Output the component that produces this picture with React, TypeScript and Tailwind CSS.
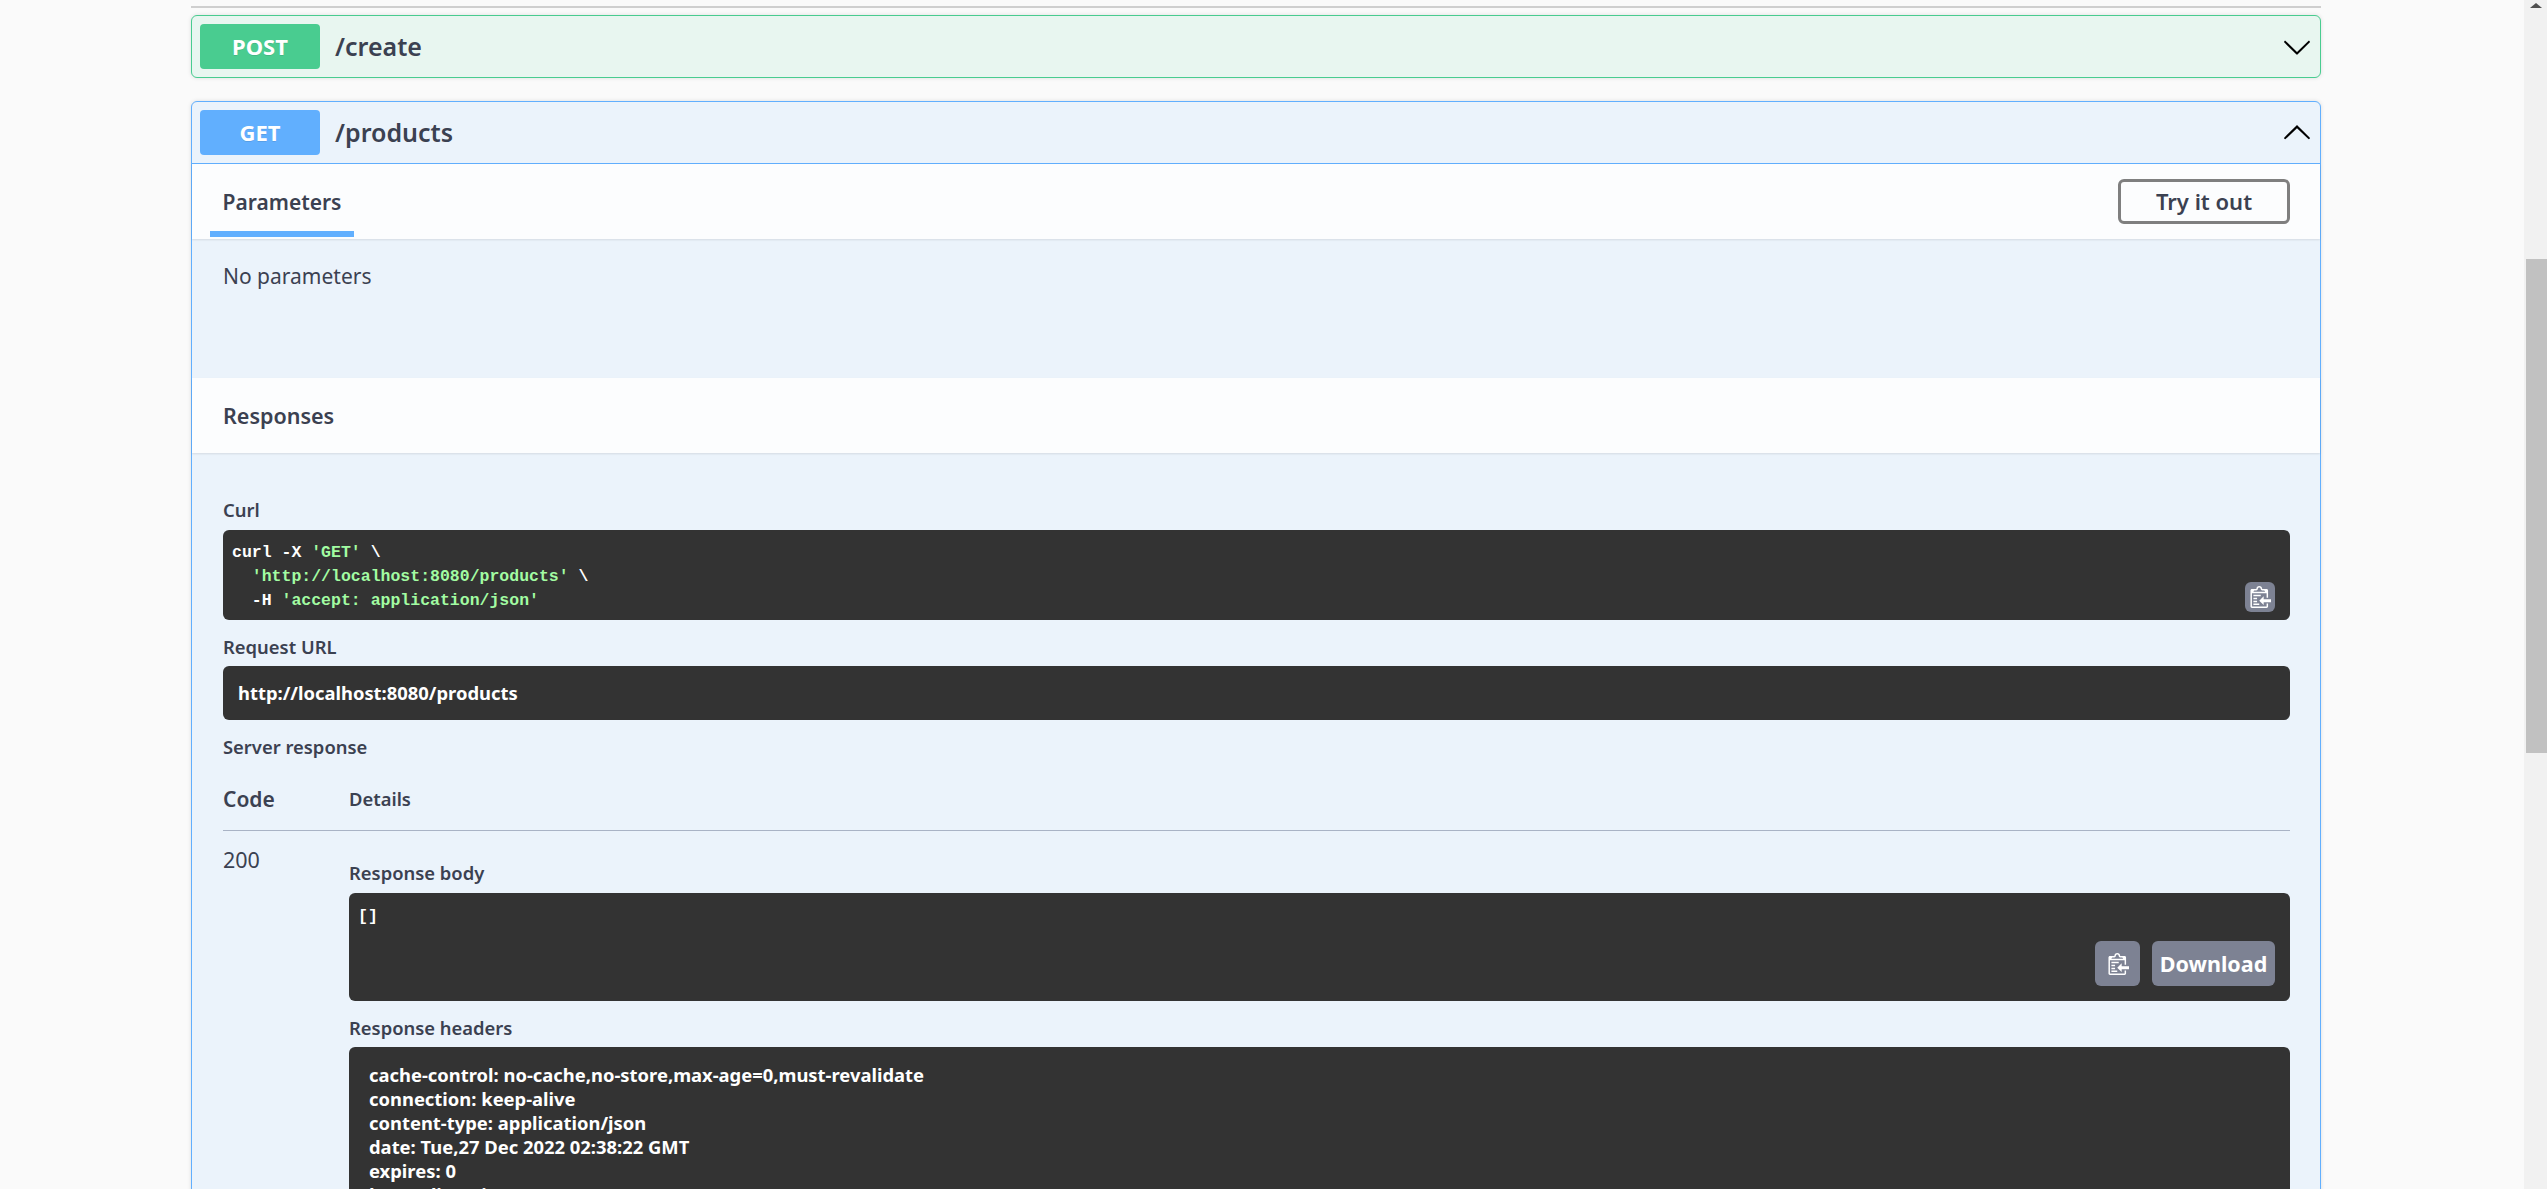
const ink = "text-[#3b4151]";

const CopyIcon = ({ className }: { className: string }) => (
  <svg viewBox="0 0 15 16" className={className} aria-hidden="true">
    <g transform="translate(1, -0.5)">
      <path
        fill="#ffffff"
        fillRule="evenodd"
        d="M2 13h4v1H2v-1zm5-6H2v1h5V7zm2 3V8l-3 3 3 3v-2h5v-2H9zM4.5 9H2v1h2.5V9zM2 12h2.5v-1H2v1zm9 1h1v2c-.02.28-.11.52-.3.7-.19.18-.42.28-.7.3H1c-.55 0-1-.45-1-1V4c0-.55.45-1 1-1h3c0-1.11.89-2 2-2 1.11 0 2 .89 2 2h3c.55 0 1 .45 1 1v5h-1V6H1v9h10v-2zM2 5h8c0-.55-.45-1-1-1H8c-.55 0-1-.45-1-1s-.45-1-1-1-1 .45-1 1-.45 1-1 1H3c-.55 0-1 .45-1 1z"
      />
    </g>
  </svg>
);

const Chevron = ({ up }: { up?: boolean }) => (
  <svg viewBox="0 0 20 20" className={`ml-auto mr-[8px] size-[30px] ${up ? "rotate-180" : ""}`} aria-hidden="true">
    <path d="M17.418 6.109c.272-.268.709-.268.979 0s.271.701 0 .969l-7.908 7.83c-.27.268-.707.268-.979 0l-7.908-7.83c-.27-.268-.27-.701 0-.969.271-.268.709-.268.979 0L10 13.25l7.418-7.141z" />
  </svg>
);

const Summary = ({ method, path, badge, up }: { method: string; path: string; badge: string; up?: boolean }) => (
  <div className="flex h-[61px] items-center pl-[8px]">
    <span className={`flex h-[45px] w-[120px] items-center justify-center rounded-[4px] text-[22px] font-bold text-white [text-shadow:0_1px_0_rgba(0,0,0,0.1)] ${badge}`}>
      {method}
    </span>
    <span className={`ml-[15px] text-[25px] font-semibold ${ink}`}>{path}</span>
    <Chevron up={up} />
  </div>
);

const Label = ({ children, className = "" }: { children: string; className?: string }) => (
  <div className={`flex h-[28px] items-center text-[18.4px] font-semibold ${ink} ${className}`}>{children}</div>
);

const headerLines = [
  "cache-control: no-cache,no-store,max-age=0,must-revalidate",
  "connection: keep-alive",
  "content-type: application/json",
  "date: Tue,27 Dec 2022 02:38:22 GMT",
  "expires: 0",
  "keep-alive: timeout=60",
];

const Green = ({ children }: { children: string }) => <span className="text-[#a2fca2]">{children}</span>;

export default function App() {
  return (
    <div className="flex h-[1189px] overflow-hidden bg-[#fafafa] font-['Noto_Sans',sans-serif]">
      <main className="w-[2524px] shrink-0 pl-[191px] pt-[6px]">
        <div className="w-[2130px]">
          <div className="h-[2px] bg-[#cfcfcf]" />

          <section className="mt-[7px] rounded-[6px] border border-[#49cc90] bg-[#e8f6f0] shadow-[0_0_4px_rgba(0,0,0,0.12)]">
            <Summary method="POST" path="/create" badge="bg-[#49cc90]" />
          </section>

          <section className="mt-[23px] h-[1200px] rounded-t-[6px] border border-[#61affe] bg-[#ebf3fb] shadow-[0_0_4px_rgba(0,0,0,0.12)]">
            <div className="border-b border-[#61affe]">
              <Summary method="GET" path="/products" badge="bg-[#61affe]" up />
            </div>

            <div className="flex h-[75px] items-start justify-between bg-[#fcfdfe] pl-[18px] pr-[30px] shadow-[0_1px_2px_rgba(0,0,0,0.1)]">
              <div className={`flex h-[73px] w-[144px] items-center justify-center border-b-[6px] border-[#61affe] pt-[10px] text-[21px] font-semibold ${ink}`}>
                Parameters
              </div>
              <button className={`mt-[15px] h-[45px] w-[172px] rounded-[6px] border-[3px] border-[#7f7f7f] bg-transparent text-[22px] font-semibold ${ink}`}>
                Try it out
              </button>
            </div>

            <div className="h-[139px] px-[31px] pt-[22px]">
              <p className={`text-[21px] leading-[30px] ${ink}`}>No parameters</p>
            </div>

            <div className={`flex h-[75px] items-center bg-[#fcfdfe] px-[31px] pt-[1px] text-[21.5px] font-semibold shadow-[0_1px_2px_rgba(0,0,0,0.1)] ${ink}`}>
              Responses
            </div>

            <div className="pl-[31px] pr-[30px] pt-[43px]">
              <Label>Curl</Label>
              <div className="relative mt-[6px] h-[90px] rounded-[6px] bg-[#333333] pl-[9px] pt-[11px] font-['Liberation_Mono',monospace] text-[16.5px] font-bold leading-[24px] whitespace-pre text-white">
                <div>curl -X <Green>'GET'</Green> \</div>
                <div>  <Green>'http://localhost:8080/products'</Green> \</div>
                <div>  -H <Green>'accept: application/json'</Green></div>
                <button className="absolute bottom-[8px] right-[15px] flex size-[30px] items-center justify-center rounded-[6px] bg-[#7d8293]">
                  <CopyIcon className="h-[24px] w-[22px]" />
                </button>
              </div>

              <Label className="mt-[13px]">Request URL</Label>
              <div className="mt-[5px] flex h-[54px] items-center rounded-[6px] bg-[#333333] pl-[15px] text-[18.4px] font-bold text-white">
                http://localhost:8080/products
              </div>

              <Label className="mt-[13px]">Server response</Label>

              <div className={`mt-[24px] flex h-[28px] items-center ${ink}`}>
                <span className="w-[126px] pt-[2px] text-[21px] font-semibold">Code</span>
                <span className="text-[18.4px] font-semibold">Details</span>
              </div>
              <div className="mt-[17px] h-px bg-[#a9b3c5]" />

              <div className="flex">
                <div className={`w-[126px] shrink-0 pt-[15px] text-[21.5px] leading-[28px] ${ink}`}>200</div>
                <div className="min-w-0 flex-1 pt-[28px]">
                  <Label>Response body</Label>
                  <div className="relative mt-[6px] h-[108px] rounded-[6px] bg-[#333333] pl-[9px] pt-[12px] font-['Liberation_Mono',monospace] text-[16.5px] font-bold leading-[24px] text-white">
                    []
                    <div className="absolute bottom-[15px] right-[15px] flex gap-[12px]">
                      <button className="flex size-[45px] items-center justify-center rounded-[6px] bg-[#7d8293]">
                        <CopyIcon className="h-[24px] w-[22px]" />
                      </button>
                      <button className="h-[45px] w-[123px] rounded-[6px] bg-[#7d8293] font-['Noto_Sans',sans-serif] text-[21.5px] font-bold text-white">
                        Download
                      </button>
                    </div>
                  </div>

                  <Label className="mt-[13px]">Response headers</Label>
                  <div className="mt-[5px] h-[300px] rounded-[6px] bg-[#333333] pl-[20px] pt-[16px] text-[18.4px] font-bold leading-[24px] text-white">
                    {headerLines.map((line) => (
                      <div key={line}>{line}</div>
                    ))}
                  </div>
                </div>
              </div>
            </div>
          </section>
        </div>
      </main>

      <aside className="relative h-full flex-1 bg-[#f1f1f1]">
        <svg viewBox="0 0 12 5" className="mx-auto mt-[3px] h-[5px] w-[12px]" aria-hidden="true">
          <path d="M6 0l6 5H0z" fill="#505050" />
        </svg>
        <div className="absolute left-[2px] right-0 top-[259px] h-[494px] bg-[#c1c1c1]" />
      </aside>
    </div>
  );
}
